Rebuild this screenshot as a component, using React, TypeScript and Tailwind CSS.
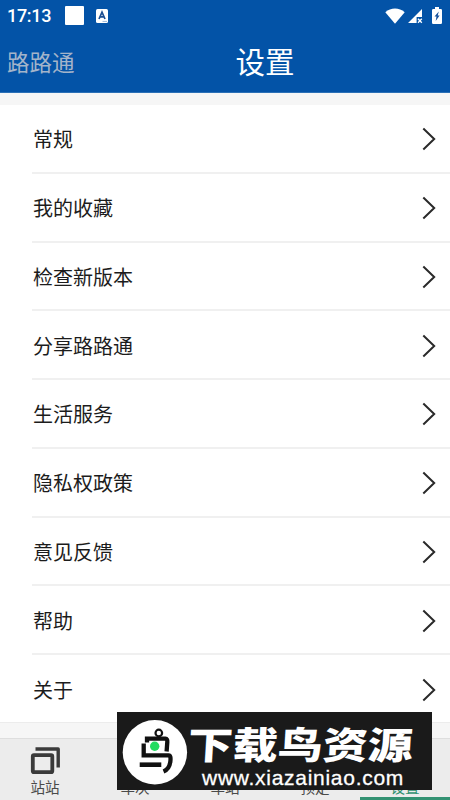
import React from "react";

const rows = [
    "常规",
    "我的收藏",
    "检查新版本",
    "分享路路通",
    "生活服务",
    "隐私权政策",
    "意见反馈",
    "帮助",
    "关于",
];

const tabs = ["站站", "车次", "车站", "预定", "设置"];

const StatusBar = () => {
    return (
        <div className="flex h-[31px] items-center pl-[7px] pr-[8px] text-white">
            <span className="w-[45px] font-[Roboto] text-[18px] font-medium leading-none tracking-[-0.3px]">
                17:13
            </span>
            <div className="ml-[13px] h-[19px] w-[19px] rounded-[1px] bg-white"></div>
            <svg className="ml-[12px]" width="12" height="14" viewBox="0 0 12 14">
                <rect width="12" height="14" rx="1.5" fill="#fff" />
                <path
                    d="M3 10 L6 3.2 L9 10 M4.2 7.9 H7.8"
                    fill="none"
                    stroke="#1c4f92"
                    strokeWidth="1.7"
                />
                <path d="M6.5 12.4 H11" stroke="#9db8d8" strokeWidth="1" />
            </svg>
            <div className="ml-auto flex items-center">
                <svg width="20" height="16" viewBox="0 0 20 16">
                    <path
                        d="M0.3 4.2 C5.8 -0.7 14.2 -0.7 19.7 4.2 L10 15.7 Z"
                        fill="#fff"
                    />
                </svg>
                <svg className="ml-[3px]" width="15" height="16" viewBox="0 0 15 16">
                    <path d="M14 1 V9 H8.6 V15 H0 Z" fill="#fff" />
                    <path
                        d="M10 10.8 L13.8 14.8 M13.8 10.8 L10 14.8"
                        stroke="#fff"
                        strokeWidth="1.3"
                    />
                </svg>
                <svg className="ml-[9px]" width="10" height="17" viewBox="0 0 10 17">
                    <path
                        d="M3 0 H7 V2 H8.8 Q10 2 10 3.2 V15.8 Q10 17 8.8 17 H1.2 Q0 17 0 15.8 V3.2 Q0 2 1.2 2 H3 Z"
                        fill="#fff"
                    />
                    <path
                        d="M6.8 4.5 L2.5 9.6 H4.5 L3.7 14 L7.6 8.6 H5.7 Z"
                        fill="#14509b"
                    />
                </svg>
            </div>
        </div>
    );
};

const Watermark = () => {
    return (
        <div className="absolute left-[117px] top-[712px] flex h-[78px] w-[315px] items-center overflow-hidden bg-[#1a1a1a] pl-[5px]">
            <svg
                className="shrink-0"
                width="66"
                height="68"
                viewBox="0 -1 66 68"
                fill="none"
            >
                <circle cx="32.9" cy="34.3" r="32.2" fill="#fff" />
                <g stroke="#111" strokeWidth="4.3">
                    <path d="M25 24.5 V20.7 H43.5 Q45.5 20.7 45.3 24 L44.6 33.5" />
                    <path d="M21.7 25.5 V37.4 H46.8 Q49 37.4 48.4 43 Q47.6 51 41.5 53.5" />
                    <path d="M17.7 46.7 H39.3" strokeWidth="4.6" />
                </g>
                <circle
                    cx="36.8"
                    cy="15"
                    r="3.3"
                    stroke="#111"
                    strokeWidth="2.2"
                />
                <circle cx="32.7" cy="28.3" r="4.7" fill="#22dc60" />
            </svg>
            <div className="h-full flex-1 text-white">
                <p className="mt-[7px] origin-left -skew-x-3 scale-x-[1.2] whitespace-nowrap text-[37.5px] font-black leading-[48px]">
                    下载鸟资源
                </p>
                <p className="mt-px origin-left pl-[14px] font-['Liberation_Sans'] text-[21px] leading-[20px] tracking-[0.72px] [-webkit-text-stroke:0.3px_white]">
                    www.xiazainiao.com
                </p>
            </div>
        </div>
    );
};

const App = () => {
    return (
        <div className="relative flex h-[800px] w-[450px] flex-col overflow-hidden bg-[#f6f6f6] font-['Noto_Sans_CJK_SC',sans-serif]">
            <header className="h-[93px] shrink-0 border-b border-[#2b70b6] bg-[#0353a7]">
                <StatusBar />
                <div className="grid h-[60px] grid-cols-[1fr_auto_1fr] items-center">
                    <span className="pl-[7px] text-[22.5px] leading-none text-[#a3b4ca]">
                        路路通
                    </span>
                    <h1 className="translate-x-[40px] text-[29.5px] leading-none text-white">
                        设置
                    </h1>
                </div>
            </header>
            <main className="mt-[12px] shrink-0 border-b border-[#ececec] bg-white">
                {rows.map((row, i) => (
                    <div
                        key={row}
                        className={
                            i < rows.length - 1
                                ? "ml-[32px] flex h-[68.75px] items-center justify-between border-b-2 border-[#f0f0f0] pl-px pr-[14px] pt-[2px]"
                                : "ml-[32px] flex h-[67px] items-center justify-between pl-px pr-[14px] pt-[2px]"
                        }
                    >
                        <span className="text-[20px] leading-none text-[#1c1c1c]">
                            {row}
                        </span>
                        <svg width="14" height="24" viewBox="0 0 14 24">
                            <path
                                d="M1.3 1.5 L12.2 12 L1.3 22.5"
                                fill="none"
                                stroke="#2a2a2a"
                                strokeWidth="2"
                            />
                        </svg>
                    </div>
                ))}
            </main>
            <nav className="mt-auto grid h-[62px] shrink-0 grid-cols-5 border-t border-[#dedede] bg-[#ececec]">
                {tabs.map((tab, i) => (
                    <div
                        key={tab}
                        className={
                            i === 4
                                ? "flex flex-col items-center border-b-[3px] border-[#339273] text-[#339273]"
                                : "flex flex-col items-center text-[#4a4a4a]"
                        }
                    >
                        <svg
                            className="mt-[8px] shrink-0"
                            width="30"
                            height="28"
                            viewBox="0 0 30 28"
                            fill="none"
                            stroke="#3a3a3a"
                        >
                            {i === 0 && (
                                <>
                                    <rect
                                        x="2.8"
                                        y="8.2"
                                        width="19.5"
                                        height="17"
                                        rx="1.2"
                                        strokeWidth="3.8"
                                    />
                                    <path
                                        d="M5.5 2 H28.2 V20.5"
                                        strokeWidth="3.4"
                                        strokeLinejoin="round"
                                    />
                                </>
                            )}
                        </svg>
                        <span className="mt-[3px] text-[14.6px] leading-[17px]">
                            {tab}
                        </span>
                    </div>
                ))}
            </nav>
            <Watermark />
        </div>
    );
};

export default App;
